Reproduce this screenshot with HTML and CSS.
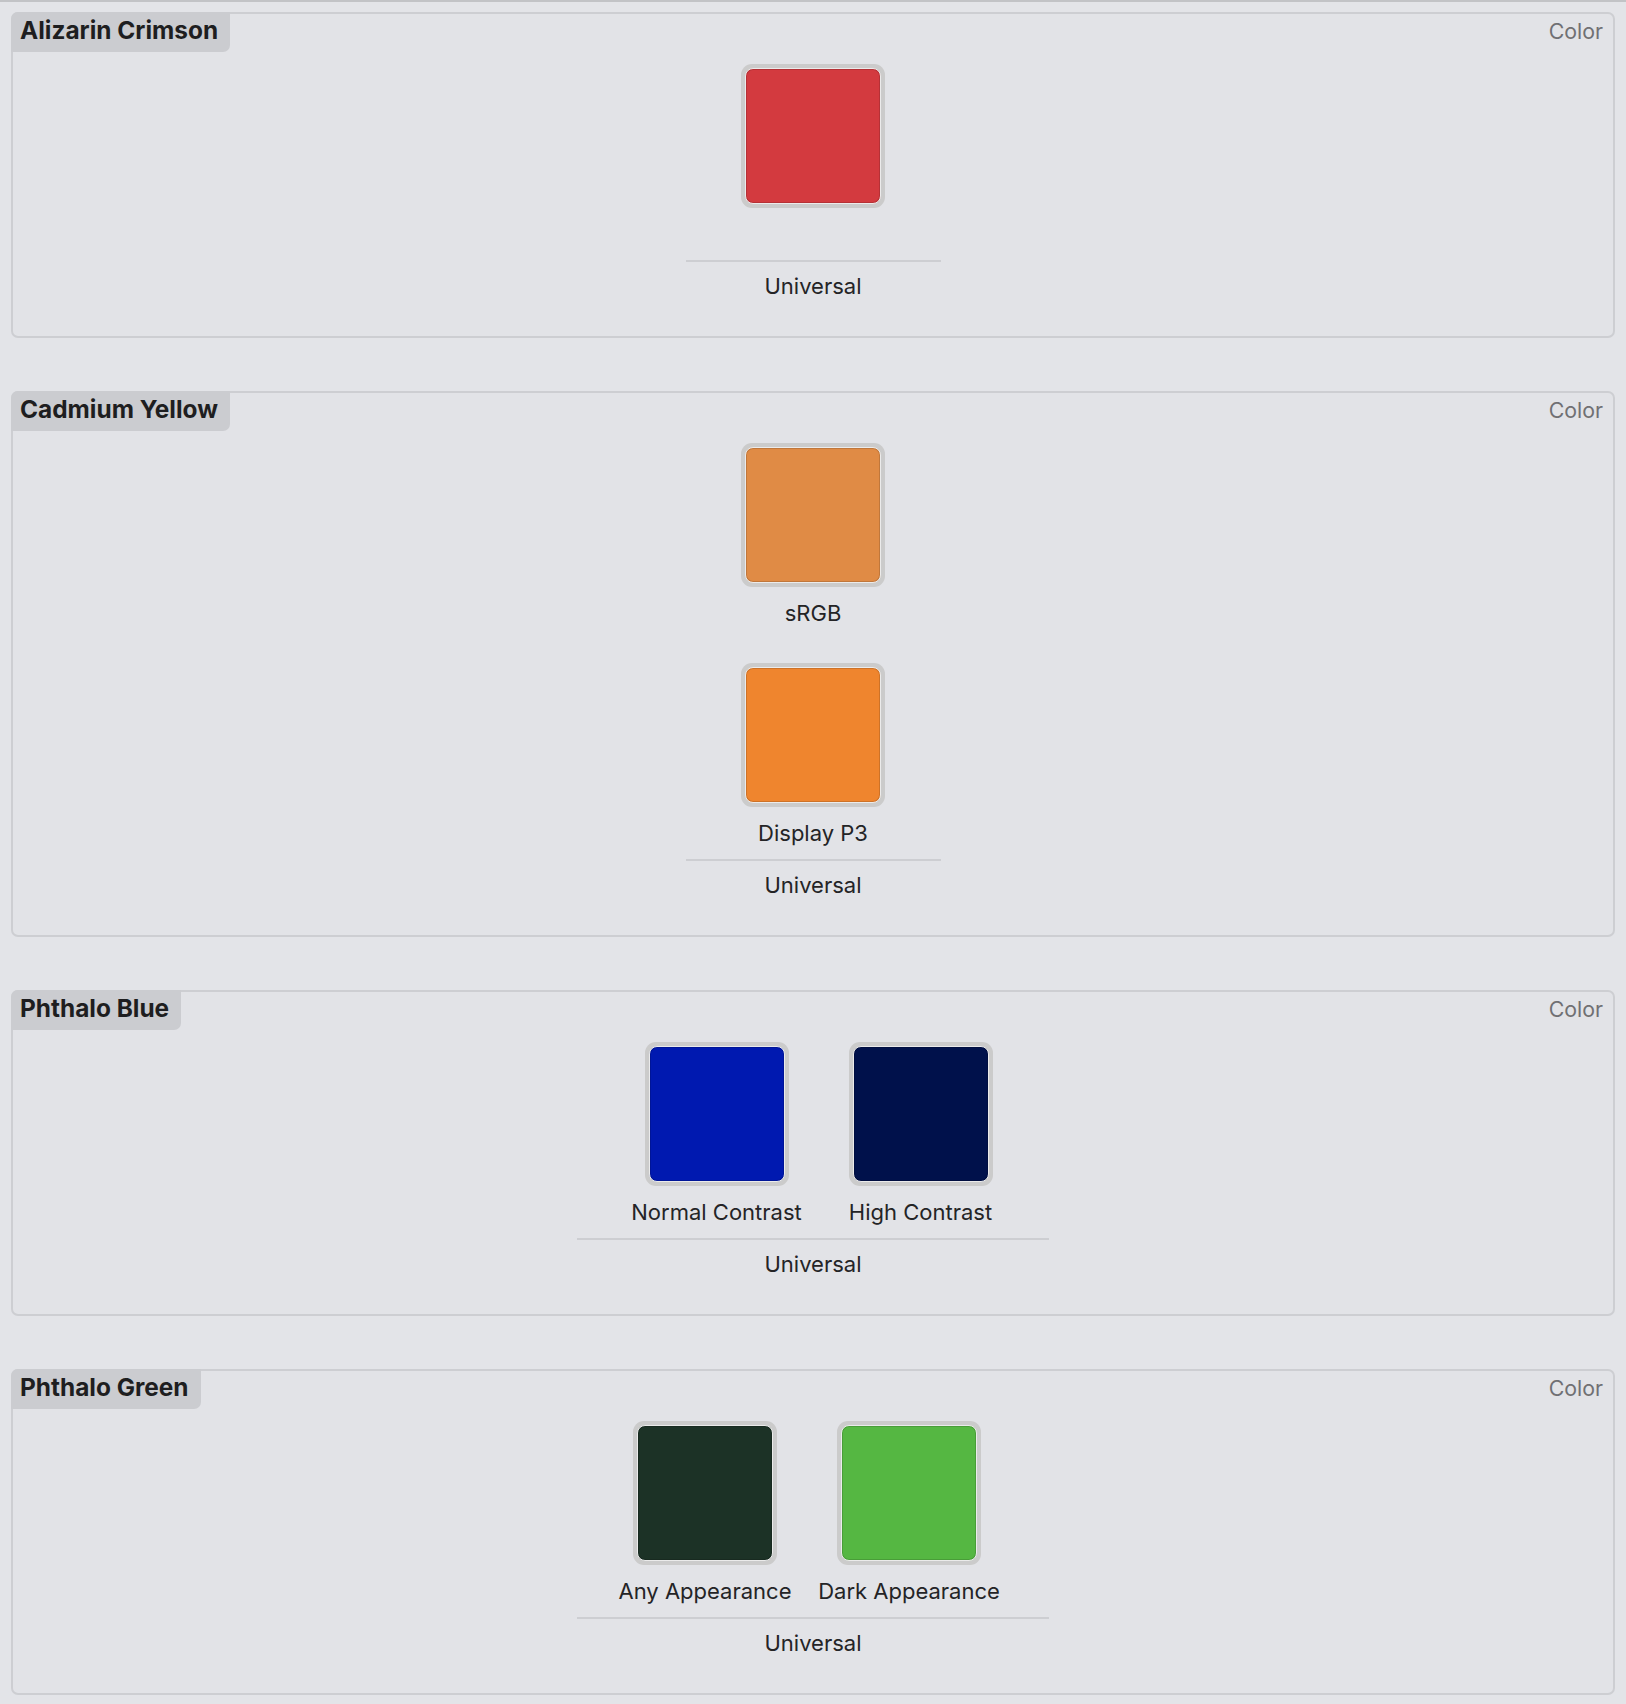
FILE: index.html
```html
<!DOCTYPE html>
<html lang="en">
<head>
<meta charset="utf-8">
<title>Colors</title>
<link rel="stylesheet" href="styles.css">
</head>
<body>
<main class="list">
  <section class="card">
    <header class="card-head">
      <h2 class="card-title">Alizarin Crimson</h2>
      <span class="card-kind">Color</span>
    </header>
    <div class="group">
      <div class="slots slots--single">
        <div class="slot">
          <div class="swatch"><div class="chip chip--crimson"></div></div>
          <div class="slot-label"></div>
        </div>
      </div>
      <div class="universal">Universal</div>
    </div>
  </section>

  <section class="card">
    <header class="card-head">
      <h2 class="card-title">Cadmium Yellow</h2>
      <span class="card-kind">Color</span>
    </header>
    <div class="group">
      <div class="slots slots--single">
        <div class="slot">
          <div class="swatch"><div class="chip chip--srgb"></div></div>
          <div class="slot-label">sRGB</div>
        </div>
        <div class="slot">
          <div class="swatch"><div class="chip chip--p3"></div></div>
          <div class="slot-label">Display P3</div>
        </div>
      </div>
      <div class="universal">Universal</div>
    </div>
  </section>

  <section class="card">
    <header class="card-head">
      <h2 class="card-title">Phthalo Blue</h2>
      <span class="card-kind">Color</span>
    </header>
    <div class="group">
      <div class="slots slots--contrast">
        <div class="slot">
          <div class="swatch"><div class="chip chip--blue"></div></div>
          <div class="slot-label">Normal Contrast</div>
        </div>
        <div class="slot">
          <div class="swatch"><div class="chip chip--navy"></div></div>
          <div class="slot-label">High Contrast</div>
        </div>
      </div>
      <div class="universal">Universal</div>
    </div>
  </section>

  <section class="card">
    <header class="card-head">
      <h2 class="card-title">Phthalo Green</h2>
      <span class="card-kind">Color</span>
    </header>
    <div class="group">
      <div class="slots slots--appearance">
        <div class="slot">
          <div class="swatch"><div class="chip chip--forest"></div></div>
          <div class="slot-label">Any Appearance</div>
        </div>
        <div class="slot">
          <div class="swatch"><div class="chip chip--green"></div></div>
          <div class="slot-label">Dark Appearance</div>
        </div>
      </div>
      <div class="universal">Universal</div>
    </div>
  </section>
</main>
</body>
</html>
```

FILE: styles.css
```css
html {
  background: #e3e4e8;
}

body {
  margin: 0;
  min-height: 1704px;
  box-sizing: border-box;
  border-top: 2px solid #c2c3c6;
  padding: 10px 11px 0 11px;
  background: #e3e4e8;
  font-family: Inter, "Noto Sans", "Liberation Sans", sans-serif;
  color: #242426;
}

.list {
  display: flex;
  flex-direction: column;
  gap: 53px;
}

.card {
  border: 2px solid #cdced2;
  border-radius: 7px;
  background: #e2e3e7;
  padding-bottom: 36px;
}

.card-head {
  display: flex;
  justify-content: space-between;
  align-items: flex-start;
  height: 40px;
  margin: -2px 0 0 -2px;
}

.card-title {
  margin: 0;
  height: 40px;
  box-sizing: border-box;
  padding: 1px 12px 5px 9px;
  line-height: 34px;
  font-size: 24.4px;
  font-weight: 700;
  color: #1e1e20;
  background: #cbccd0;
  border-radius: 7px 0 7px 0;
}

.card-kind {
  padding: 2px 10px 0 0;
  line-height: 34px;
  font-size: 21.3px;
  color: #707073;
}

.group {
  width: fit-content;
  margin: 12px auto 0;
}

.slots {
  display: grid;
  padding: 0 32px;
  row-gap: 36px;
  justify-items: center;
}

.slots--single {
  grid-template-columns: 191px;
}

.slots--contrast {
  grid-template-columns: 215px 193px;
}

.slots--appearance {
  grid-template-columns: 192px 216px;
}

.slot {
  display: flex;
  flex-direction: column;
  align-items: center;
}

.swatch {
  width: 144px;
  height: 144px;
  box-sizing: border-box;
  padding: 4px;
  border-radius: 11px;
  background: #cbcbcb;
}

.chip {
  width: 100%;
  height: 100%;
  box-sizing: border-box;
  border: 1.5px solid #ebebeb;
  border-radius: 8px;
  box-shadow: inset 0 0 0 1px rgba(0, 0, 0, 0.14);
}

.chip--crimson { background-color: #d33a3f; }
.chip--srgb { background-color: #e08b45; }
.chip--p3 { background-color: #ef852e; }
.chip--blue { background-color: #0019b0; }
.chip--navy { background-color: #00114b; }
.chip--forest { background-color: #1c3226; }
.chip--green { background-color: #55b742; }

.slot-label {
  margin-top: 13px;
  min-height: 27px;
  line-height: 27px;
  font-size: 22px;
  white-space: nowrap;
  color: #242426;
}

.universal {
  margin-top: 12px;
  border-top: 2px solid #cdced2;
  padding-top: 11px;
  line-height: 27px;
  font-size: 22px;
  text-align: center;
  color: #242426;
}
```
